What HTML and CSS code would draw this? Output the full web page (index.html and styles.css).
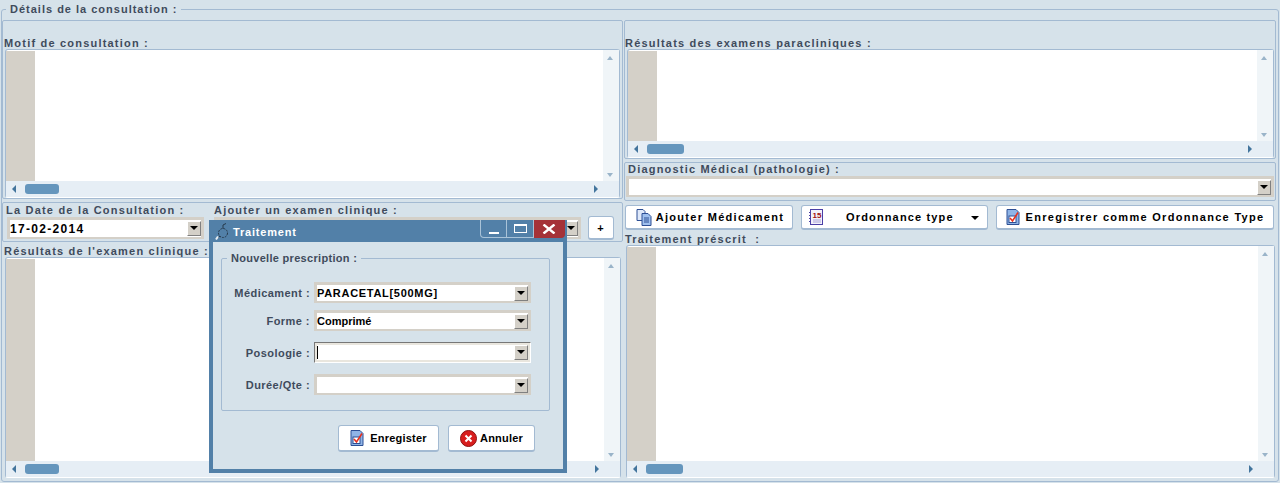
FILE: index.html
```html
<!doctype html>
<html>
<head>
<meta charset="utf-8">
<title>Détails de la consultation</title>
<link rel="stylesheet" href="styles.css">
</head>
<body>
<svg class="defs" width="0" height="0">
  <symbol id="ico-save" viewBox="0 0 14 16">
    <path d="M1 .5h9l3 3v12H1z" fill="#8fb4e6" stroke="#2d4f94"/>
    <rect x="3" y="7" width="7" height="6.500" fill="#fff" stroke="#2d4f94"/>
    <path d="M4 9l2.500 3L12 3.500" fill="none" stroke="#e8301c" stroke-width="1.600"/>
  </symbol>
</svg>

<fieldset class="details">
  <legend>Détails de la consultation :</legend>
  <div class="columns">

    <div class="col">
      <div class="panel panel-motif">
        <label class="lbl">Motif de consultation :</label>
        <div class="memo memo-motif">
          <div class="memo-main"><div class="gutter"></div><div class="area"></div><div class="vbar"><i class="up"></i><i class="down"></i></div></div>
          <div class="hbar"><i class="left"></i><b class="thumb"></b><i class="right"></i></div>
        </div>
      </div>
      <div class="panel panel-date">
        <div class="field field-date">
          <label class="lbl">La Date de la Consultation :</label>
          <div class="combo"><span class="val val-wide">17-02-2014</span><span class="arrow"></span></div>
        </div>
        <div class="field field-exam">
          <label class="lbl">Ajouter un examen clinique :</label>
          <div class="combo"><span class="val"></span><span class="arrow"></span></div>
        </div>
        <button class="btn btn-plus">+</button>
      </div>
      <label class="lbl lbl-result">Résultats de l'examen clinique :</label>
      <div class="memo memo-result">
        <div class="memo-main"><div class="gutter"></div><div class="area"></div><div class="vbar"><i class="up"></i><i class="down"></i></div></div>
        <div class="hbar"><i class="left"></i><b class="thumb"></b><i class="right"></i></div>
      </div>
    </div>

    <div class="col">
      <div class="panel panel-para">
        <label class="lbl">Résultats des examens paracliniques :</label>
        <div class="memo memo-para">
          <div class="memo-main"><div class="gutter"></div><div class="area"></div><div class="vbar"><i class="up"></i><i class="down"></i></div></div>
          <div class="hbar"><i class="left"></i><b class="thumb"></b><i class="right"></i></div>
        </div>
      </div>
      <div class="panel panel-diag">
        <label class="lbl">Diagnostic Médical (pathologie) :</label>
        <div class="combo"><span class="val"></span><span class="arrow"></span></div>
      </div>
      <div class="actions">
        <button class="btn btn-add">
          <svg width="16" height="17" viewBox="0 0 16 17"><path d="M1 .5h6l2 2v9H1z" fill="#dfe9fa" stroke="#2d4f94"/><path d="M6 4.500h6l3 3v9H6z" fill="#9fc0ee" stroke="#2d4f94"/><path d="M8 9h5M8 11h5M8 13h5" stroke="#2d4f94"/></svg>
          Ajouter Médicament
        </button>
        <button class="btn btn-type">
          <svg width="14" height="16" viewBox="0 0 14 16"><rect x="1.500" y=".5" width="12" height="15" fill="#f4f2fb" stroke="#4b3fa6"/><path d="M.5 3v1M.5 6v1M.5 9v1M.5 12v1" stroke="#4b3fa6"/><path d="M4 11h8M4 13h8" stroke="#a9a4d8"/><text x="3.500" y="9" class="cal-num">15</text></svg>
          <span class="type-text">Ordonnance type</span>
          <i class="caret"></i>
        </button>
        <button class="btn btn-save">
          <svg width="14" height="16"><use href="#ico-save"/></svg>
          Enregistrer comme Ordonnance Type
        </button>
      </div>
      <label class="lbl lbl-treat">Traitement préscrit &nbsp;:</label>
      <div class="memo memo-treat">
        <div class="memo-main"><div class="gutter"></div><div class="area"></div><div class="vbar"><i class="up"></i><i class="down"></i></div></div>
        <div class="hbar"><i class="left"></i><b class="thumb"></b><i class="right"></i></div>
      </div>
    </div>

  </div>
</fieldset>

<div class="dialog">
  <div class="titlebar">
    <svg class="steth" width="14" height="17" viewBox="0 0 14 17"><circle cx="8" cy="10" r="4.500" fill="none" stroke="#26384a" stroke-dasharray="2 1"/><path d="M8 5.500V2l3-1.500M3 15l2-2" fill="none" stroke="#26384a"/><path d="M1 16.500l2-3" stroke="#e8eef3" stroke-width="2"/></svg>
    <span class="title">Traitement</span>
    <div class="winbtns">
      <span class="winbtn"><i class="w-min"></i></span>
      <span class="winbtn"><i class="w-max"></i></span>
      <span class="winbtn w-close"><svg width="14" height="10" viewBox="0 0 14 10"><path d="M1.500 .5l11 9M12.500 .5l-11 9" stroke="#fff" stroke-width="2.400"/></svg></span>
    </div>
  </div>
  <div class="dialog-body">
    <fieldset class="rx">
      <legend>Nouvelle prescription :</legend>
      <div class="rx-row"><label class="lbl">Médicament :</label><div class="combo"><span class="val val-caps">PARACETAL[500MG]</span><span class="arrow"></span></div></div>
      <div class="rx-row"><label class="lbl">Forme :</label><div class="combo"><span class="val">Comprimé</span><span class="arrow"></span></div></div>
      <div class="rx-row rx-gap"><label class="lbl">Posologie :</label><div class="combo combo-focus"><span class="val"><i class="cursor"></i></span><span class="arrow"></span></div></div>
      <div class="rx-row rx-gap"><label class="lbl">Durée/Qte :</label><div class="combo"><span class="val"></span><span class="arrow"></span></div></div>
    </fieldset>
    <div class="dialog-actions">
      <button class="btn btn-rec"><svg width="14" height="16"><use href="#ico-save"/></svg>Enregister</button>
      <button class="btn btn-cancel">
        <svg width="17" height="17" viewBox="0 0 17 17"><circle cx="8.500" cy="8.500" r="8" fill="#d81e1e" stroke="#8c1010"/><path d="M5.500 5.500l6 6M11.500 5.500l-6 6" stroke="#fff" stroke-width="2"/></svg>
        Annuler
      </button>
    </div>
  </div>
</div>
</body>
</html>
```

FILE: styles.css
```css
* { box-sizing: border-box; margin: 0; padding: 0; }
html, body { height: 483px; overflow: hidden; }
body { position: relative; background: #d6e2ea; font: bold 11px "Liberation Sans", Arial, sans-serif; letter-spacing: 1.2px; color: #3f4b5c; }
.defs { position: absolute; }

.details { height: 480px; margin: 2px 1px 0; padding: 4px 1px 0 0; min-width: 0; border: 1px solid #a3bad2; border-radius: 3px; }
.details legend { margin-left: 4px; padding: 0 4px; height: 14px; line-height: 14px; font-size: 11px; letter-spacing: 1px; }

.columns { display: grid; grid-template-columns: 621px 652px; gap: 1px; }
.col { display: flex; flex-direction: column; }
.panel { border: 1px solid #a3bad2; border-radius: 2px; }
.lbl { display: block; height: 14px; line-height: 14px; white-space: nowrap; }

.panel-motif { height: 179px; padding: 14px 2px 0 2px; }
.panel-motif .lbl { margin-left: -1px; line-height: 16px; }
.panel-date { display: flex; height: 40px; margin-top: 3px; padding: 0 6px 0 3px; }
.field-date { width: 208px; }
.field-date .combo { width: 197px; margin-left: 1px; }
.field-exam { width: 374px; }
.field-exam .combo { width: 367px; }
.btn-plus { width: 26px; height: 24px; margin-top: 13px; letter-spacing: 0; font-size: 15px; }
.lbl-result { height: 13px; margin: 2px 0 0 2px; }
.memo-result { height: 221px; margin: 0 2px 0 3px; }

.panel-para { height: 139px; padding: 14px 1px 0 2px; }
.panel-para .lbl { margin-left: -2px; line-height: 16px; }
.panel-diag { height: 39px; margin-top: 3px; padding: 0 1px 0 1px; }
.panel-diag .lbl { padding-left: 2px; height: 13px; line-height: 12px; }
.panel-diag .combo { height: 21px; }
.actions { display: flex; gap: 8px; margin-top: 4px; padding-left: 1px; height: 25px; }
.lbl-treat { height: 13px; margin: 2px 0 0 1px; }
.memo-treat { height: 233px; margin: 0 1px 0 2px; }
.memo-para .thumb, .memo-treat .thumb { width: 37px; }

.memo { display: flex; flex-direction: column; background: #fff; border: 1px solid #a3bad2; border-bottom-color: #fff; border-radius: 3px; }
.memo-motif { height: 149px; }
.memo-para { height: 109px; }
.memo-main { flex: 1; display: flex; min-height: 0; }
.gutter { width: 29px; background: #d4d0c8; margin-top: 1px; }
.area { flex: 1; border-left: 1px solid #fff; }
.vbar { position: relative; width: 16px; background: #f0f5f8; }
.hbar { position: relative; flex: none; height: 16px; background: #e6eef5; }
.thumb { position: absolute; left: 19px; top: 3px; width: 34px; height: 10px; background: #6596bd; border-radius: 3px; }
.up, .down, .left, .right { position: absolute; width: 0; height: 0; border-style: solid; border-color: transparent; }
.up { top: 6px; left: 4px; border-width: 0 3.500px 4px; border-bottom-color: #9ab4c9; }
.down { bottom: 4px; left: 4px; border-width: 4px 3.500px 0; border-top-color: #9ab4c9; }
.left { left: 6px; top: 4px; border-width: 4px 4px 4px 0; border-right-color: #43759d; }
.right { right: 21px; top: 4px; border-width: 4px 0 4px 4px; border-left-color: #43759d; }

.combo { display: flex; align-items: center; height: 22px; background: #fff; border: 3px solid #d4d0c8; border-bottom-width: 2px; }
.val { flex: 1; color: #000; letter-spacing: 0; white-space: nowrap; font-size: 11px; }
.val-wide { font-size: 12px; letter-spacing: 1.3px; }
.val-caps { letter-spacing: .7px; }
.arrow { position: relative; flex: none; width: 14px; height: 15px; background: #d4d0c8; border: 1px solid; border-color: #fff #808080 #808080 #fff; }
.arrow::after { content: ""; position: absolute; left: 2px; top: 4px; border-style: solid; border-width: 4px 4px 0; border-color: #000 transparent transparent; }
.combo-focus { border: 1px solid #fff; border-color: #777 #fff #fff #777; box-shadow: inset 2px 2px 0 #e9e6de, inset -2px -2px 0 #e9e6de; padding: 2px; }
.cursor { display: block; width: 1px; height: 13px; background: #000; }

.btn { display: flex; align-items: center; justify-content: center; background: #fff; border: 1px solid #a3bad2; border-bottom-width: 2px; border-radius: 3px; color: #000; font: inherit; letter-spacing: 1.3px; }
.btn-add { width: 168px; gap: 4px; padding-left: 2px; }
.btn-type { position: relative; width: 187px; padding-left: 7px; justify-content: flex-start; letter-spacing: 1.15px; }
.type-text { margin-left: 23px; }
.caret { position: absolute; right: 8px; top: 10px; border-style: solid; border-width: 4px 4px 0; border-color: #000 transparent transparent; }
.btn-save { width: 278px; gap: 6px; }
.cal-num { font: bold 8px "Liberation Sans", sans-serif; letter-spacing: 0; fill: #a01010; }

.dialog { position: absolute; left: 209px; top: 220px; width: 358px; height: 253px; background: #5280a8; padding: 0 4px 4px; }
.titlebar { display: flex; align-items: flex-start; height: 22px; color: #fff; margin-left: -2px; }
.steth { margin: 3px 0 0 4px; }
.title { margin: 6px 0 0 4px; font-size: 11px; letter-spacing: .8px; }
.winbtns { display: flex; margin-left: auto; margin-right: -2px; }
.winbtn { display: flex; align-items: center; justify-content: center; width: 27px; height: 18px; border: 1px solid #a9c3d8; border-top: 0; }
.winbtn:first-child { border-radius: 0 0 0 4px; }
.winbtn + .winbtn { border-left: 0; }
.w-close { width: 31px; background: #a53238; border-color: #a53238; border-radius: 0 0 4px 0; }
.w-min { display: block; width: 10px; height: 2px; margin-top: 8px; background: #fff; }
.w-max { display: block; width: 13px; height: 9px; border: 1px solid #fff; border-top-width: 2px; }

.dialog-body { height: 227px; padding-top: 9px; background: #d6e2ea; }
.rx { width: 329px; height: 160px; margin-left: 8px; padding: 17px 0 0; min-width: 0; border: 1px solid #a3bad2; border-radius: 2px; }
.rx legend { margin-left: 5px; padding: 0 4px; height: 14px; line-height: 14px; letter-spacing: .3px; font-size: 11px; }
.rx-row { display: flex; align-items: center; justify-content: flex-end; gap: 4px; height: 21px; margin: 0 18px 7px 0; }
.rx-row .lbl { letter-spacing: .45px; }
.rx-row.rx-gap { margin-top: 11px; margin-bottom: 0; }
.rx-row .combo { width: 217px; height: 21px; }
.dialog-actions { display: flex; justify-content: flex-end; gap: 9px; margin: 14px 28px 0 0; }
.dialog-actions .btn { height: 27px; letter-spacing: .2px; }
.btn-rec { width: 101px; gap: 6px; }
.btn-cancel { width: 87px; gap: 3px; }
```
